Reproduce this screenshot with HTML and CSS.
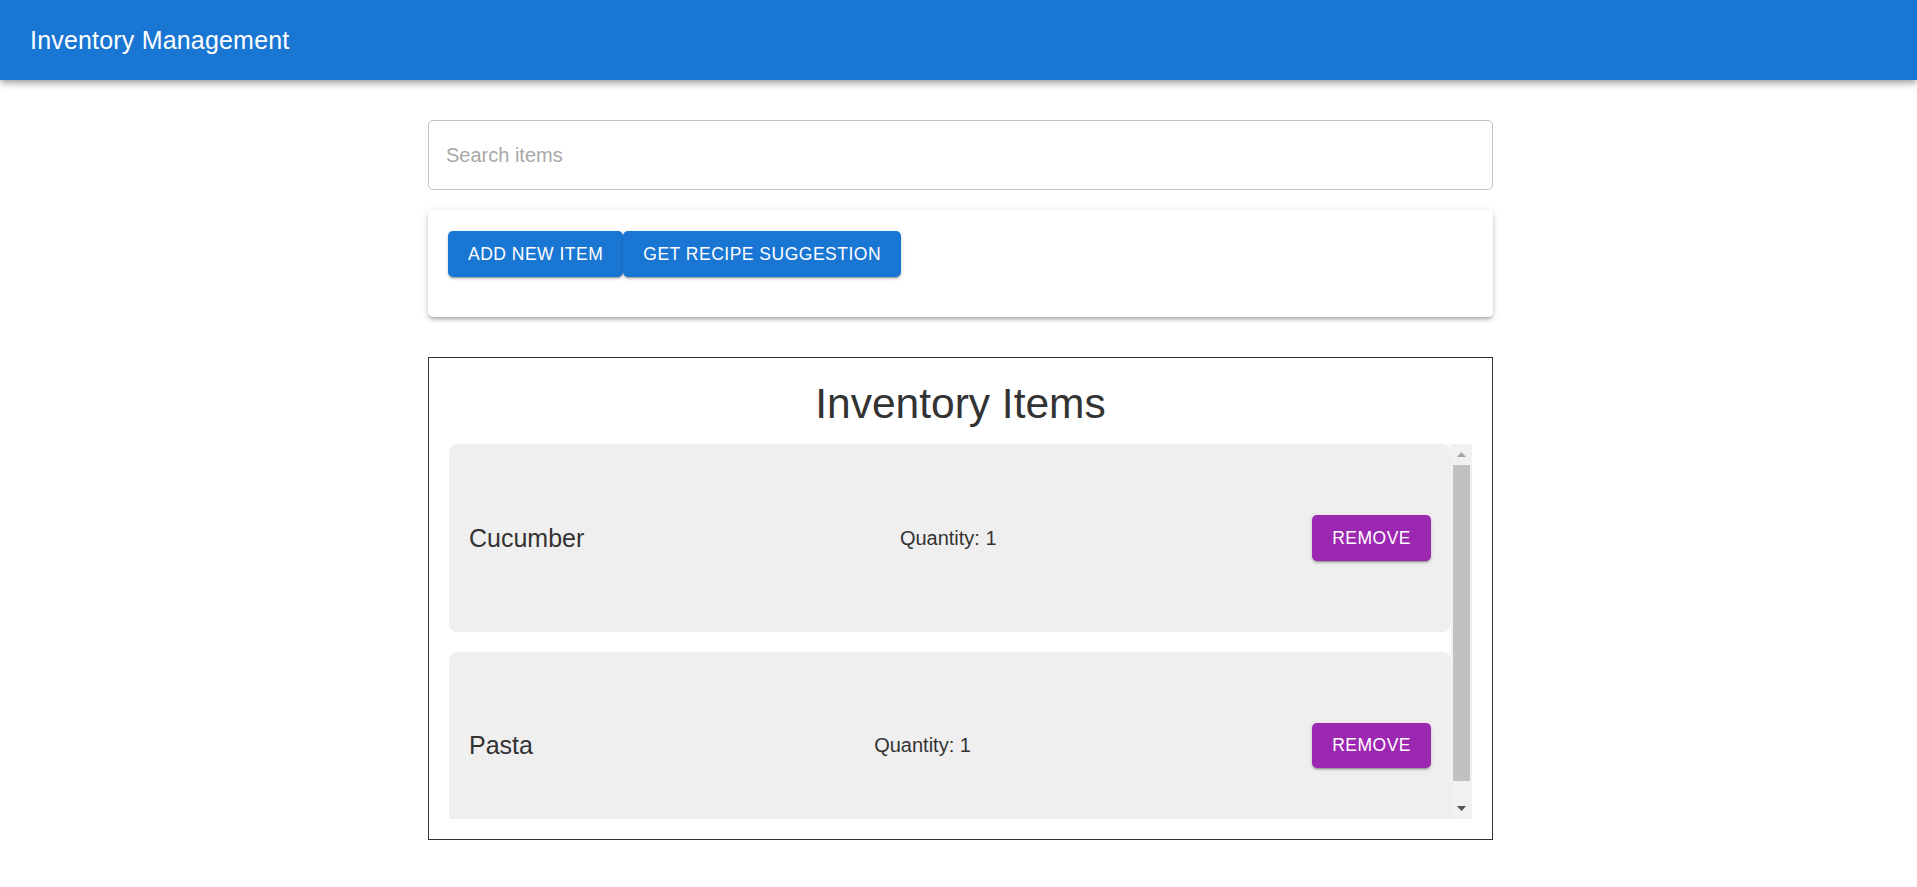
FILE: index.html
```html
<!DOCTYPE html>
<html lang="en">
<head>
<meta charset="utf-8">
<title>Inventory Management</title>
<link rel="stylesheet" href="styles.css">
</head>
<body>
<header class="appbar">
  <div class="toolbar">
    <h1 class="brand">Inventory Management</h1>
  </div>
</header>
<main class="container">
  <div class="search">
    <input class="search-input" type="text" placeholder="Search items">
  </div>
  <section class="paper">
    <div class="actions">
      <button class="btn btn-primary">Add New Item</button>
      <button class="btn btn-primary">Get Recipe Suggestion</button>
    </div>
  </section>
  <section class="inventory">
    <h2 class="inventory-title">Inventory Items</h2>
    <div class="scroller">
      <div class="list">
        <div class="item">
          <span class="item-name">Cucumber</span>
          <span class="item-qty">Quantity: 1</span>
          <button class="btn btn-secondary">Remove</button>
        </div>
        <div class="item">
          <span class="item-name">Pasta</span>
          <span class="item-qty">Quantity: 1</span>
          <button class="btn btn-secondary">Remove</button>
        </div>
      </div>
      <div class="scrollbar" aria-hidden="true">
        <div class="sb-btn">
          <svg width="9" height="5" viewBox="0 0 9 5"><polygon points="0,5 4.5,0 9,5" fill="#a3a3a3"/></svg>
        </div>
        <div class="sb-track">
          <div class="sb-thumb"></div>
        </div>
        <div class="sb-btn">
          <svg width="9" height="5" viewBox="0 0 9 5"><polygon points="0,0 9,0 4.5,5" fill="#505050"/></svg>
        </div>
      </div>
    </div>
  </section>
</main>
</body>
</html>
```
FILE: styles.css
```css
* { box-sizing: border-box; }

html, body {
  margin: 0;
  padding: 0;
  background: #fff;
  font-family: "Liberation Sans", Arial, sans-serif;
  color: #333;
}

.appbar {
  height: 80px;
  background: #1976d2;
  color: #fff;
  box-shadow: 0 2.5px 5px -1px rgba(0,0,0,0.2), 0 5px 6px 0 rgba(0,0,0,0.14), 0 1px 12px 0 rgba(0,0,0,0.12);
}

.toolbar {
  height: 80px;
  display: flex;
  align-items: center;
  padding: 0 30px;
}

.brand {
  margin: 0;
  font-size: 25px;
  font-weight: 400;
  line-height: 1.6;
  letter-spacing: 0.0075em;
}

.container {
  width: 1069px;
  margin: 40px auto 0;
  padding-left: 4px;
  display: flex;
  flex-direction: column;
}

.search-input {
  display: block;
  width: 100%;
  height: 70px;
  border: 1px solid #c4c4c4;
  border-radius: 5px;
  padding: 0 17px;
  font-family: inherit;
  font-size: 20px;
  color: #333;
  outline: none;
  background: #fff;
}

.search-input::placeholder {
  color: #a8a8a8;
  opacity: 1;
}

.paper {
  margin-top: 20px;
  background: #fff;
  border-radius: 5px;
  padding: 21px 20px 40px;
  box-shadow: 0 3px 3px -2px rgba(0,0,0,0.2), 0 3px 4px 0 rgba(0,0,0,0.14), 0 1px 8px 0 rgba(0,0,0,0.12);
}

.actions {
  display: flex;
}

.btn {
  border: 0;
  border-radius: 5px;
  color: #fff;
  font-family: inherit;
  font-size: 17.5px;
  font-weight: 400;
  line-height: 1.75;
  letter-spacing: 0.5px;
  text-transform: uppercase;
  padding: 7.5px 20px;
  cursor: pointer;
  box-shadow: 0 3px 1px -2px rgba(0,0,0,0.2), 0 2px 2px 0 rgba(0,0,0,0.14), 0 1px 5px 0 rgba(0,0,0,0.12);
}

.btn-primary { background: #1976d2; }
.btn-secondary { background: #9c27b0; }

.inventory {
  margin-top: 40px;
  border: 1px solid #333;
  padding: 20px 20px 20px;
}

.inventory-title {
  margin: 0 0 14px;
  text-align: center;
  font-size: 42.5px;
  font-weight: 400;
  line-height: 1.235;
  color: #333;
}

.scroller {
  display: flex;
  height: 375px;
}

.list {
  flex: 1;
  overflow: hidden;
  display: flex;
  flex-direction: column;
  gap: 20px;
}

.item {
  flex: 0 0 187.5px;
  background: #efefef;
  border-radius: 8px;
  padding: 0 20px;
  display: flex;
  align-items: center;
  justify-content: space-between;
}

.item-name {
  font-size: 25px;
  line-height: 1.6;
  color: #333;
}

.item-qty {
  font-size: 20px;
  line-height: 1.5;
  color: #333;
}

.scrollbar {
  flex: 0 0 21px;
  display: flex;
  flex-direction: column;
  background: #f1f1f1;
}

.sb-btn {
  flex: 0 0 21px;
  display: flex;
  align-items: center;
  justify-content: center;
}

.sb-track {
  flex: 1;
  padding: 0 2px 17px;
  display: flex;
  flex-direction: column;
}

.sb-thumb {
  flex: 1;
  background: #c1c1c1;
}
```
